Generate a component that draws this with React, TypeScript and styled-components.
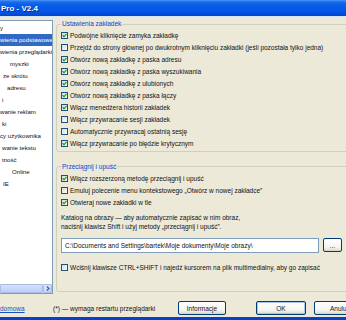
import React from "react";
import styled, { createGlobalStyle } from "styled-components";

const treeItems = [
  { label: "y", indent: 0 },
  { label: "wienia podstawowe", indent: 0, selected: true },
  { label: "wienia przeglądarki", indent: 0 },
  { label: "myszki", indent: 10 },
  { label: "ze skrótu", indent: 3 },
  { label: "adresu", indent: 7 },
  { label: "i", indent: 2 },
  { label: "wanie reklam", indent: 0 },
  { label: "ki", indent: 2 },
  { label: "cy użytkownika", indent: 0 },
  { label: "wanie tekstu", indent: 2 },
  { label: "tność", indent: 2 },
  { label: "Online", indent: 12 },
  { label: "IE", indent: 3 },
];

const tabOptions = [
  { label: "Podwójne kliknięcie zamyka zakładkę", checked: true },
  {
    label:
      "Przejdź do strony głównej po dwukrotnym kliknięciu zakładki (jeśli pozostała tylko jedna)",
    checked: false,
  },
  { label: "Otwórz nową zakładkę z paska adresu", checked: true },
  { label: "Otwórz nową zakładkę z paska wyszukiwania", checked: true },
  { label: "Otwórz nową zakładkę z ulubionych", checked: true },
  { label: "Otwórz nową zakładkę z paska łączy", checked: true },
  { label: "Włącz menedżera historii zakładek", checked: true },
  { label: "Włącz przywracanie sesji zakładek", checked: false },
  { label: "Automatycznie przywracaj ostatnią sesję", checked: false },
  { label: "Włącz przywracanie po błędzie krytycznym", checked: true },
];

const dragOptions = [
  { label: "Włącz rozszerzoną metodę przeciągnij i upuść", checked: true },
  {
    label: "Emuluj polecenie menu kontekstowego „Otwórz w nowej zakładce”",
    checked: false,
  },
  { label: "Otwieraj nowe zakładki w tle", checked: true },
];

const Check = ({ checked, label }: { checked: boolean; label: string }) => (
  <OptionRow>
    <Box>
      {checked && (
        <svg width="5" height="5" viewBox="0 0 5 5">
          <path d="M0.6 2.3 L2 3.8 L4.5 0.9" fill="none" stroke="#21a121" strokeWidth="1.3" />
        </svg>
      )}
    </Box>
    <span>{label}</span>
  </OptionRow>
);

const App = () => {
  return (
    <>
      <GlobalStyle />
      <Window>
        <TitleBar>Pro - V2.4</TitleBar>
        <Main>
          <TreePanel>
            <TreeList>
              {treeItems.map((item, idx) => (
                <TreeItem key={idx} $indent={item.indent}>
                  <TreeLabel $selected={!!item.selected}>{item.label}</TreeLabel>
                </TreeItem>
              ))}
            </TreeList>
            <HScroll>
              <ScrollThumb />
              <ScrollButton>
                <svg width="4" height="5" viewBox="0 0 4 5">
                  <path d="M0.8 0.5 L3 2.5 L0.8 4.5" fill="none" stroke="#4d6185" strokeWidth="1.2" />
                </svg>
              </ScrollButton>
            </HScroll>
          </TreePanel>
          <Content>
            <Group>
              <Legend>Ustawienia zakładek</Legend>
              <Options>
                {tabOptions.map((o, idx) => (
                  <Check key={idx} checked={o.checked} label={o.label} />
                ))}
              </Options>
            </Group>
            <Group $gap>
              <Legend>Przeciągnij i upuść</Legend>
              <Options $top={2}>
                {dragOptions.map((o, idx) => (
                  <Check key={idx} checked={o.checked} label={o.label} />
                ))}
              </Options>
              <Hint>
                Katalog na obrazy — aby automatycznie zapisać w nim obraz,
                <br />
                naciśnij klawisz Shift i użyj metody „przeciągnij i upuść”.
              </Hint>
              <PathRow>
                <PathInput>C:\Documents and Settings\bartek\Moje dokumenty\Moje obrazy\</PathInput>
                <Button $width={19}>...</Button>
              </PathRow>
              <MediaRow>
                <Check
                  checked={false}
                  label="Wciśnij klawisze CTRL+SHIFT i najedź kursorem na plik multimedialny, aby go zapisać"
                />
              </MediaRow>
            </Group>
          </Content>
        </Main>
        <Footer>
          <LinkSlot>
            <HomeLink>domowa</HomeLink>
          </LinkSlot>
          <Note>(*) — wymaga restartu przeglądarki</Note>
          <Button $width={48}>Informacje</Button>
          <Button $width={50} $space={30} $default>
            OK
          </Button>
          <Button $width={50} $space={8}>
            Anuluj
          </Button>
        </Footer>
        <FrameEdge />
      </Window>
    </>
  );
};

export default App;

const GlobalStyle = createGlobalStyle`
  html, body {
    margin: 0;
    padding: 0;
    background: #ece9d8;
  }

  body {
    font-family: "Liberation Sans", Arial, sans-serif;
    font-size: 6.5px;
    color: #111;
  }
`;

const Window = styled.div`
  width: 346px;
  height: 320px;
  overflow: hidden;
  display: flex;
  flex-direction: column;
  background: #ece9d8;
`;

const TitleBar = styled.div`
  height: 17px;
  flex: none;
  display: flex;
  align-items: center;
  padding-left: 1px;
  background: linear-gradient(
    to bottom,
    #4a96f7 0px,
    #1a6cee 2px,
    #0a5de6 5px,
    #0056e8 11px,
    #0049d4 15px,
    #003fc2 17px
  );
  color: #fff;
  font-weight: bold;
  font-size: 8px;
  text-shadow: 1px 1px 0 #0b2a8a;
  border-bottom: 1px solid #d8e4f8;
  box-sizing: border-box;
`;

const Main = styled.div`
  flex: 1;
  min-height: 0;
  display: flex;
  gap: 3px;
  padding-top: 3px;
`;

const TreePanel = styled.div`
  width: 53px;
  flex: none;
  box-sizing: border-box;
  border: 1px solid #7f9db9;
  border-left: none;
  background: #fff;
  display: flex;
  flex-direction: column;
`;

const TreeList = styled.div`
  flex: 1;
  padding-top: 1px;
  overflow: hidden;
  font-size: 6.1px;
`;

const TreeItem = styled.div<{ $indent: number }>`
  height: 12px;
  line-height: 12px;
  padding-left: ${(p) => p.$indent}px;
  white-space: nowrap;
  overflow: hidden;
`;

const TreeLabel = styled.span<{ $selected: boolean }>`
  display: inline-block;
  padding-right: 1px;
  background: ${(p) => (p.$selected ? "#316ac5" : "transparent")};
  color: ${(p) => (p.$selected ? "#fff" : "#111")};
`;

const HScroll = styled.div`
  height: 9px;
  flex: none;
  display: flex;
  background: #f3f1ec;
`;

const ScrollThumb = styled.div`
  flex: 1;
  box-sizing: border-box;
  border: 1px solid #a9bde8;
  border-radius: 1px;
  background: linear-gradient(to bottom, #d4e1fd, #bccffa);
`;

const ScrollButton = styled.div`
  width: 9px;
  flex: none;
  box-sizing: border-box;
  border: 1px solid #a9bde8;
  border-radius: 1px;
  background: linear-gradient(135deg, #e2ebfe, #b9cdf9);
  display: flex;
  align-items: center;
  justify-content: center;
`;

const Content = styled.div`
  width: 300px;
  flex: none;
  display: flex;
  flex-direction: column;
`;

const Group = styled.fieldset<{ $gap?: boolean }>`
  margin: ${(p) => (p.$gap ? "11px" : "0")} 0 0 0;
  padding: 0 0 1px 4px;
  border: 1px solid #d0d0bf;
  border-radius: 3px;
  min-width: 0;
`;

const Legend = styled.legend`
  padding: 0 1px;
  color: #0046d5;
  line-height: 8px;
`;

const Options = styled.div<{ $top?: number }>`
  padding-top: ${(p) => p.$top ?? 1.5}px;
  display: flex;
  flex-direction: column;
`;

const OptionRow = styled.div`
  height: 12px;
  display: flex;
  align-items: center;
  gap: 2px;
  white-space: nowrap;
`;

const Box = styled.span`
  width: 7px;
  height: 7px;
  flex: none;
  box-sizing: border-box;
  border: 1px solid #1c5180;
  background: linear-gradient(135deg, #dcdcd5, #fbfbf9);
  display: flex;
  align-items: center;
  justify-content: center;
`;

const Hint = styled.div`
  margin-top: 4px;
  line-height: 9px;
`;

const PathRow = styled.div`
  margin-top: 7px;
  display: flex;
  align-items: center;
  gap: 4px;
`;

const PathInput = styled.div`
  width: 258px;
  height: 15px;
  box-sizing: border-box;
  border: 1px solid #7f9db9;
  background: #fff;
  padding-left: 3px;
  display: flex;
  align-items: center;
  white-space: nowrap;
`;

const MediaRow = styled.div`
  margin-top: 9px;
  padding-bottom: 16px;
`;

const Footer = styled.div`
  height: 23px;
  flex: none;
  box-sizing: border-box;
  padding-top: 5px;
  display: flex;
  align-items: center;
`;

const LinkSlot = styled.div`
  width: 53px;
  flex: none;
`;

const HomeLink = styled.span`
  color: #1a4fc4;
  text-decoration: underline;
`;

const Note = styled.div`
  width: 125px;
  flex: none;
  white-space: nowrap;
`;

const Button = styled.div<{ $width: number; $space?: number; $default?: boolean }>`
  width: ${(p) => p.$width}px;
  height: 14px;
  flex: none;
  margin-left: ${(p) => p.$space ?? 0}px;
  box-sizing: border-box;
  border: 1px solid #003c74;
  border-radius: 2px;
  background: linear-gradient(to bottom, #ffffff, #f4f4f0 70%, #d9d4c8);
  box-shadow: ${(p) => (p.$default ? "inset 0 0 0 1px #a8c4f0" : "none")};
  display: flex;
  align-items: center;
  justify-content: center;
  white-space: nowrap;
`;

const FrameEdge = styled.div`
  height: 3px;
  flex: none;
  background: #0a3fc8;
`;
